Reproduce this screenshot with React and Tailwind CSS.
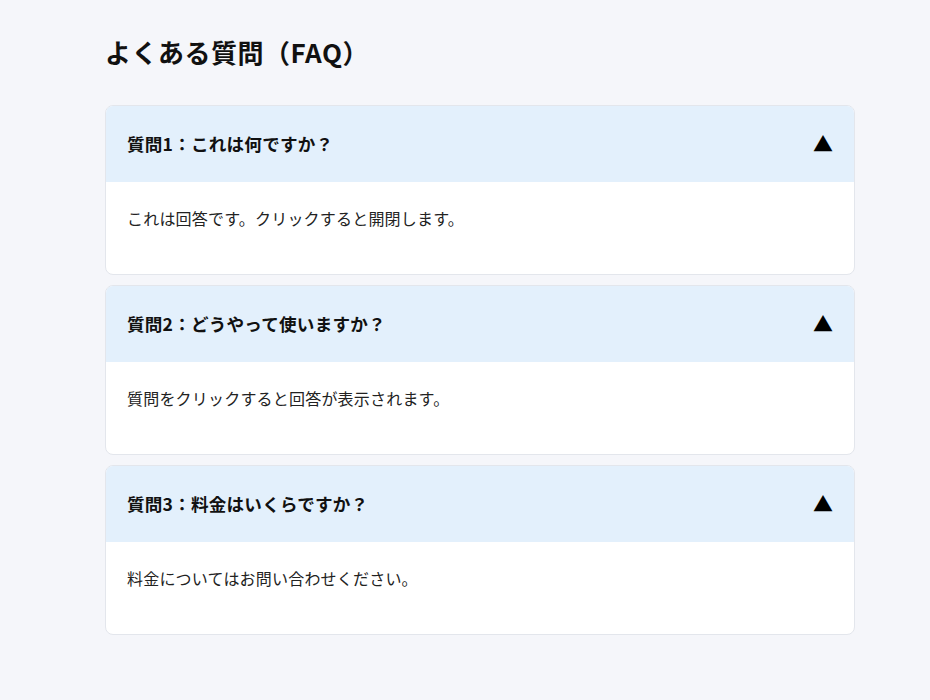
import { useState } from "react";

const faqs = [
  { q: "質問1：これは何ですか？", a: "これは回答です。クリックすると開閉します。" },
  { q: "質問2：どうやって使いますか？", a: "質問をクリックすると回答が表示されます。" },
  { q: "質問3：料金はいくらですか？", a: "料金についてはお問い合わせください。" },
];

function FaqItem({ item }) {
  const [open, setOpen] = useState(true);

  return (
    <div className="bg-white border border-[#e3e6ec] rounded-lg overflow-hidden">
      <button
        type="button"
        onClick={() => setOpen(!open)}
        className="w-full h-[76px] flex items-center justify-between pl-[21px] pr-[21px] bg-[#e3f0fc] text-left cursor-pointer"
      >
        <span className="text-[17.6px] font-bold text-[#111] tracking-[0.2px]">{item.q}</span>
        <span className="text-[20px] leading-none text-black">{open ? "▲" : "▼"}</span>
      </button>
      {open && (
        <div className="pl-[21px] pr-[21px] pt-[23px] pb-[43px] text-[16px] leading-[26px] text-[#222] tracking-[0.2px]">
          {item.a}
        </div>
      )}
    </div>
  );
}

export default function App() {
  return (
    <div
      className="min-h-screen bg-[#f5f6fa]"
      style={{ fontFamily: '"Noto Sans CJK JP", "Noto Sans", sans-serif' }}
    >
      <div className="w-[750px] ml-[105px] pt-[30px]">
        <h1 className="text-[26px] font-bold text-[#111] leading-[44px] mb-[31px] tracking-[0.5px]">
          よくある質問（FAQ）
        </h1>
        <div className="flex flex-col gap-[10px]">
          {faqs.map((item) => (
            <FaqItem key={item.q} item={item} />
          ))}
        </div>
      </div>
    </div>
  );
}
